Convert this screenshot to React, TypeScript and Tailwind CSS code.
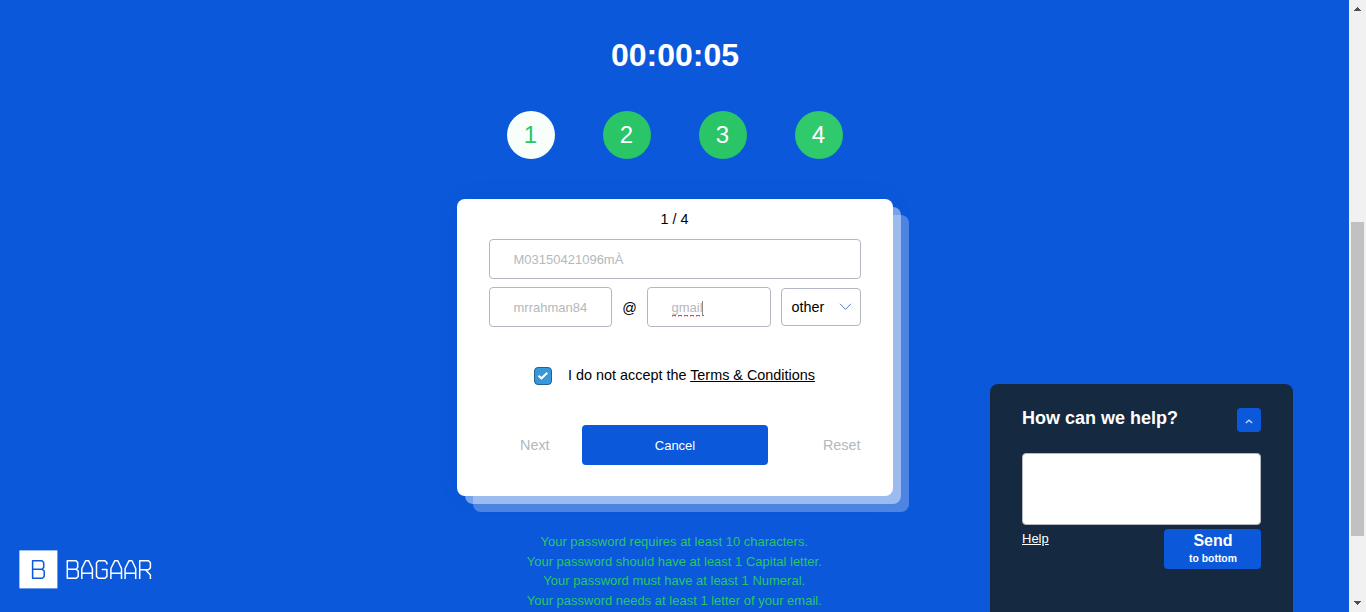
import React from "react";

const steps = [
  { n: 1, cls: "bg-[#f8fffb] text-[#2dc468]" },
  { n: 2, cls: "bg-[#2ac566] text-white" },
  { n: 3, cls: "bg-[#2ac566] text-white" },
  { n: 4, cls: "bg-[#30c96c] text-white" },
];

const rules = [
  { text: "Your password requires at least 10 characters.", cls: "h-5" },
  { text: "Your password should have at least 1 Capital letter.", cls: "h-[19px]" },
  { text: "Your password must have at least 1 Numeral.", cls: "h-5" },
  { text: "Your password needs at least 1 letter of your email.", cls: "h-5" },
];

function Field({ children, className }: { children: React.ReactNode; className: string }) {
  return (
    <div className={`flex h-10 items-center rounded-[4px] border border-[#b4b7bf] pt-[2px] pl-[23.5px] text-[13px] text-[#b4b8bb] ${className}`}>
      {children}
    </div>
  );
}

function Card() {
  return (
    <section className="mt-10 flex h-[297px] w-[436px] shrink-0 flex-col rounded-[8px] bg-white px-8 text-[14.4px] text-black shadow-[8px_8px_0_rgba(255,255,255,0.45),16px_16px_0_rgba(255,255,255,0.27),0_0_30px_rgba(0,0,0,0.04)]">
      <div className="h-10 pr-px text-center leading-10">1 / 4</div>
      <Field className="w-[372px]">M03150421096mÀ</Field>
      <div className="mt-2 flex items-center">
        <Field className="w-[123px]">mrrahman84</Field>
        <span className="w-[35px] pt-[3px] text-center">@</span>
        <Field className="w-[124px]">
          <span className="relative">
            gmail
            <svg className="absolute bottom-[1px] left-0" width="32" height="3" viewBox="0 0 32 3" fill="none" stroke="#f04444">
              <path d="M0 1.5h4M6 1.5h4M12 1.5h4M18 1.5h4M24 1.5h4M30 1.5h2" />
              <path d="M0 2.5h1M3 2.5h1M6 2.5h1M9 2.5h1M12 2.5h1M15 2.5h1M18 2.5h1M21 2.5h1M24 2.5h1M27 2.5h1" strokeOpacity="0.5" />
            </svg>
          </span>
          <i className="-ml-px h-[15px] w-px bg-[#888]" />
        </Field>
        <div className="ml-[10px] flex h-[38px] w-20 items-center justify-between rounded-[4px] border border-[#b4b7bf] pr-[8px] pl-[9.5px]">
          <span className="pt-[2px]">other</span>
          <svg width="13" height="8" viewBox="0 0 13 8" fill="none" stroke="#5278bd">
            <path d="M1 0.8L6.5 6.3L12 0.8" />
          </svg>
        </div>
      </div>
      <div className="mt-10 flex h-[18px] items-center pl-[45px]">
        <span className="flex h-[18px] w-[18px] items-center justify-center rounded-[4px] border border-[#286090] bg-[#3498db]">
          <svg width="12" height="10" viewBox="0 0 12 10" fill="none" stroke="white" strokeWidth="2">
            <path d="M1.5 4.7L4.5 7.3L10.3 1.7" />
          </svg>
        </span>
        <span className="ml-4 whitespace-nowrap">
          I do not accept the <span className="underline">Terms &amp; Conditions</span>
        </span>
      </div>
      <div className="mt-10 flex h-10 items-center text-[#b4b8bb]">
        <span className="w-[93px] pt-[2px] pl-[31px]">Next</span>
        <button className="h-10 w-[186px] rounded-[4px] bg-[#0b58db] pt-[2px] text-[13px] text-white">Cancel</button>
        <span className="flex-1 pt-[2px] pr-[0.5px] text-right">Reset</span>
      </div>
    </section>
  );
}

function HelpPanel() {
  return (
    <aside className="absolute top-[384px] left-[990px] h-[228px] w-[303px] rounded-t-[8px] bg-[#152a41] px-8 pt-6 text-white">
      <div className="flex h-[45px] items-start justify-between">
        <h2 className="text-[18px] leading-5 font-bold">How can we help?</h2>
        <button className="flex h-6 w-6 items-center justify-center rounded-[4px] bg-[#0b58db] pt-[3px]">
          <svg width="8" height="5" viewBox="0 0 8 5" fill="none" stroke="#c9daf8" strokeWidth="1.3">
            <path d="M0.8 3.9L4 1.2L7.2 3.9" />
          </svg>
        </button>
      </div>
      <div className="h-[72px] rounded-[4px] border border-[#b4b7bf] bg-white" />
      <div className="mt-1 flex items-start justify-between">
        <span className="text-[13px] leading-5 underline">Help</span>
        <button className="flex h-10 w-[97px] flex-col items-center rounded-[4px] bg-[#0b58db] pt-px pl-px font-bold">
          <span className="text-[16px] leading-[22px]">Send</span>
          <span className="text-[10.4px] leading-[14px]">to bottom</span>
        </button>
      </div>
    </aside>
  );
}

function Logo() {
  return (
    <svg className="absolute top-[550px] left-[19px]" width="134" height="39" viewBox="0 0 134 39" fill="none" role="img" aria-label="BAGAAR">
      <rect x="0.4" y="0.4" width="38" height="38" fill="white" />
      <g strokeWidth="1.5" strokeLinejoin="round">
        <path stroke="#0b58db" d="M13.6 10.8H23L24.7 12.5V17.5L23 19.2L25.2 21V26.5L23.3 28.3H13.6ZM13.6 19.2H23" />
        <path stroke="white" d="M48.3 10.8H57L58.7 12.5V17.5L57 19.2L59.2 21V26.5L57.3 28.3H48.3ZM48.3 19.2H57" />
        <path stroke="white" d="M62.8 29V18.5L66.6 10.8H69.7L73.4 18.5V29M62.8 23.2H73.4" />
        <path stroke="white" d="M87.9 14.5V12.7L86 10.8H79.4L77.5 12.7V26.4L79.4 28.3H86L87.9 26.4V19.5H82.8" />
        <path stroke="white" d="M91.9 29V18.5L95.7 10.8H98.8L102.5 18.5V29M91.9 23.2H102.5" />
        <path stroke="white" d="M106.1 29V18.5L109.9 10.8H113L116.7 18.5V29M106.1 23.2H116.7" />
        <path stroke="white" d="M120.7 29V10.8H129.5L131.4 12.7V17.8L129.5 19.8H120.7M126.5 19.8L131.4 25V29" />
      </g>
    </svg>
  );
}

function Scrollbar() {
  return (
    <div className="flex h-full w-[17px] shrink-0 flex-col items-center bg-[#f1f1f1]">
      <div className="flex h-[222px] pt-[7px]">
        <svg width="7" height="4" viewBox="0 0 7 4" fill="#505050" shapeRendering="crispEdges">
          <path d="M3 0h1v1h1v1h1v1h1v1H0V3h1V2h1V1h1z" />
        </svg>
      </div>
      <div className="h-[314px] w-[13px] bg-[#c1c1c1]" />
      <div className="pt-[65px]">
        <svg width="7" height="4" viewBox="0 0 7 4" fill="#505050" shapeRendering="crispEdges">
          <path d="M0 0h7v1H6v1H5v1H4v1H3V3H2V2H1V1H0z" />
        </svg>
      </div>
    </div>
  );
}

export default function App() {
  return (
    <div className="relative flex h-[612px] w-[1366px] overflow-hidden bg-[#0b58db] font-['Liberation_Sans',Arial,sans-serif]">
      <main className="flex flex-1 flex-col items-center pl-px">
        <h1 className="mt-[35px] text-[32px] leading-10 font-bold text-white">00:00:05</h1>
        <div className="mt-9 flex gap-12">
          {steps.map((s) => (
            <div key={s.n} className={`flex h-12 w-12 items-center justify-center rounded-full pr-px text-2xl ${s.cls}`}>
              {s.n}
            </div>
          ))}
        </div>
        <Card />
        <div className="mt-9 shrink-0 pr-[1.5px] text-center text-[13px] leading-5 text-[#2ac566]">
          {rules.map((r) => (
            <p key={r.text} className={r.cls}>
              {r.text}
            </p>
          ))}
        </div>
      </main>
      <Scrollbar />
      <Logo />
      <HelpPanel />
    </div>
  );
}
